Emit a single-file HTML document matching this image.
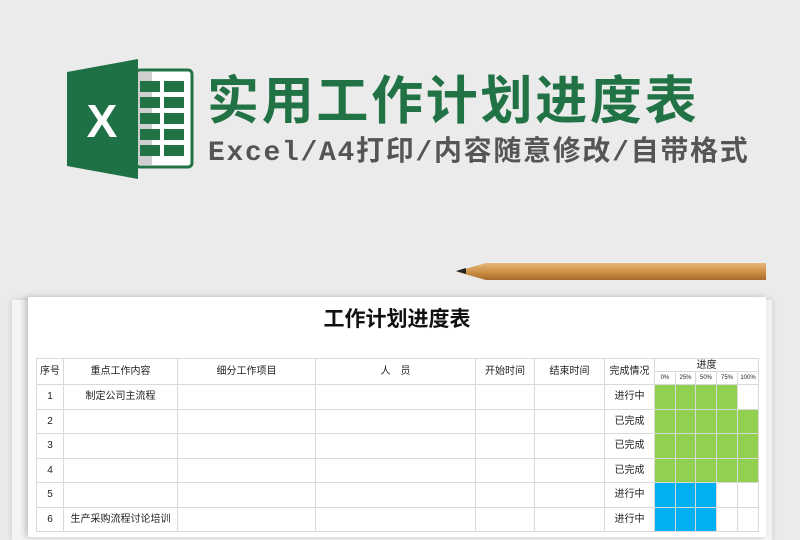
<!DOCTYPE html>
<html><head><meta charset="utf-8"><style>
body{margin:0;width:800px;height:526px;overflow:hidden;background:#ebebeb;font-family:"Liberation Sans","Noto Sans CJK SC",sans-serif;position:relative}
.a{position:absolute}
table{border-collapse:collapse;position:absolute;left:36px;top:358px;font-size:10px;color:#222;table-layout:fixed;width:722px}
td{border:1px solid #d9d9d9;text-align:center;padding:0;height:23.5px;line-height:11px;overflow:hidden;white-space:nowrap}
tr.h1 td{height:12px}
tr.h2 td{height:12px;font-size:6px;line-height:8px}
.g{background:#92d050}.b{background:#00b0f0}
</style></head><body>
<svg class="a" style="left:60px;top:55px" width="140" height="130">
<rect x="76" y="15" width="56" height="97" rx="4" fill="#fff" stroke="#217346" stroke-width="3"/>
<rect x="78" y="17" width="14" height="93" fill="#cfcfcf"/>
<g fill="#217346">
<rect x="80" y="26" width="20" height="11"/><rect x="104" y="26" width="20" height="11"/>
<rect x="80" y="42" width="20" height="11"/><rect x="104" y="42" width="20" height="11"/>
<rect x="80" y="58" width="20" height="11"/><rect x="104" y="58" width="20" height="11"/>
<rect x="80" y="74" width="20" height="11"/><rect x="104" y="74" width="20" height="11"/>
<rect x="80" y="90" width="20" height="11"/><rect x="104" y="90" width="20" height="11"/>
</g>
<polygon points="7,17 78,4 78,124 7,111" fill="#1e7145"/>
<text x="42" y="82" fill="#fff" font-size="46" font-weight="bold" text-anchor="middle" font-family="Liberation Sans">X</text>
</svg>
<div class="a" style="left:207px;top:72px;font-size:52px;font-weight:bold;color:#217346;letter-spacing:2.7px;line-height:60px;white-space:nowrap">实用工作计划进度表</div>
<div class="a" style="left:208px;top:134px;font-size:28px;font-weight:bold;color:#555;line-height:40px;letter-spacing:1.7px;white-space:nowrap;font-family:'Liberation Mono','Noto Sans CJK SC',monospace">Excel/A4打印/内容随意修改/自带格式</div>
<div class="a" style="left:456px;top:263px;width:310px;height:17px;background:linear-gradient(#e8b878,#c98a40 60%,#a56a2a);clip-path:polygon(0 50%,30px 0,100% 0,100% 100%,30px 100%);box-shadow:0 8px 10px rgba(0,0,0,.2)"></div>
<div class="a" style="left:456px;top:268px;width:10px;height:6px;background:#222;clip-path:polygon(0 50%,100% 0,100% 100%)"></div>
<div class="a" style="left:12px;top:300px;width:760px;height:240px;background:#f4f4f4;box-shadow:0 0 6px rgba(0,0,0,.15)"></div>
<div class="a" style="left:28px;top:297px;width:738px;height:240px;background:#fff;box-shadow:-3px 0 6px rgba(0,0,0,.2)"></div>
<div class="a" style="left:28px;top:303px;width:738px;text-align:center;font-size:21px;font-weight:bold;color:#111">工作计划进度表</div>
<table>
<colgroup><col style="width:27px"><col style="width:114px"><col style="width:138px"><col style="width:160px"><col style="width:59px"><col style="width:70px"><col style="width:50px"><col style="width:21px"><col style="width:20px"><col style="width:21px"><col style="width:21px"><col style="width:21px"></colgroup>
<tr class="h1"><td rowspan="2">序号</td><td rowspan="2">重点工作内容</td><td rowspan="2">细分工作项目</td><td rowspan="2">人　员</td><td rowspan="2">开始时间</td><td rowspan="2">结束时间</td><td rowspan="2">完成情况</td><td colspan="5">进度</td></tr>
<tr class="h2"><td>0%</td><td>25%</td><td>50%</td><td>75%</td><td>100%</td></tr>
<tr><td>1</td><td>制定公司主流程</td><td></td><td></td><td></td><td></td><td>进行中</td><td class="g"></td><td class="g"></td><td class="g"></td><td class="g"></td><td></td></tr>
<tr><td>2</td><td></td><td></td><td></td><td></td><td></td><td>已完成</td><td class="g"></td><td class="g"></td><td class="g"></td><td class="g"></td><td class="g"></td></tr>
<tr><td>3</td><td></td><td></td><td></td><td></td><td></td><td>已完成</td><td class="g"></td><td class="g"></td><td class="g"></td><td class="g"></td><td class="g"></td></tr>
<tr><td>4</td><td></td><td></td><td></td><td></td><td></td><td>已完成</td><td class="g"></td><td class="g"></td><td class="g"></td><td class="g"></td><td class="g"></td></tr>
<tr><td>5</td><td></td><td></td><td></td><td></td><td></td><td>进行中</td><td class="b"></td><td class="b"></td><td class="b"></td><td></td><td></td></tr>
<tr><td>6</td><td>生产采购流程讨论培训</td><td></td><td></td><td></td><td></td><td>进行中</td><td class="b"></td><td class="b"></td><td class="b"></td><td></td><td></td></tr>
</table>
</body></html>
